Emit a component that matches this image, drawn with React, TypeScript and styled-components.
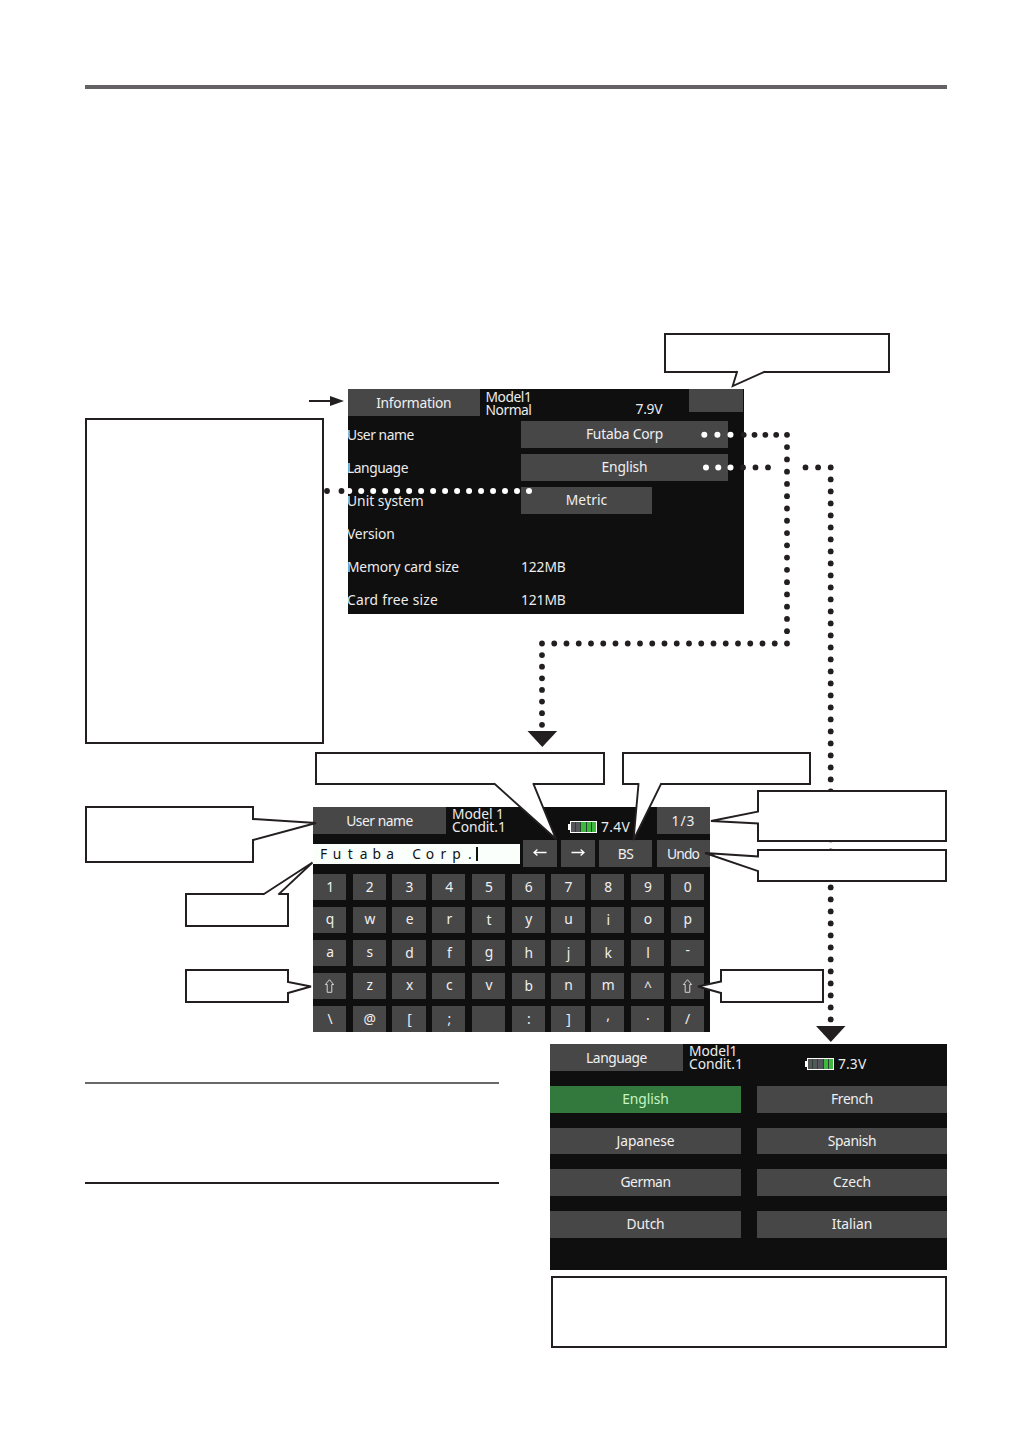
import React from 'react';
import styled, { createGlobalStyle } from 'styled-components';

const INK = '#231f20';

const GlobalStyle = createGlobalStyle`
  *, *::before, *::after { box-sizing: border-box; }
  body { margin: 0; background: #fff; }
`;

const Page = styled.main`
  position: relative;
  display: flex;
  flex-direction: column;
  width: 1032px;
  height: 1434px;
  padding: 85px 85px 0;
  overflow: hidden;
  background: #fff;
  font-family: 'Noto Sans', 'Open Sans', sans-serif;
  font-size: 13.8px;
  line-height: 18px;
  color: #ececec;
`;

const Rule = styled.hr<{ $h: number; $color: string }>`
  width: 100%;
  height: ${(p) => p.$h}px;
  margin: 0;
  border: 0;
  background: ${(p) => p.$color};
`;

const TopHint = styled.div`
  display: flex;
  margin: 244px 0 16px 579px;
`;

const InfoRow = styled.section`
  display: flex;
  align-items: flex-start;
  gap: 24px;
  height: 355px;
`;

const Note = styled.div<{ $w: number; $h: number }>`
  width: ${(p) => p.$w}px;
  height: ${(p) => p.$h}px;
  border: 2px solid ${INK};
`;

const SideNote = styled(Note)`
  margin-top: 29px;
`;

const HintRow = styled.div`
  display: flex;
  gap: 17px;
  margin: 8px 0 0 230px;
`;

const KeyboardRow = styled.section`
  display: flex;
  align-items: flex-start;
  height: 247px;
`;

const LeftHints = styled.div`
  display: flex;
  flex-direction: column;
  align-items: flex-end;
  width: 204px;
  margin: 21px 24px 0 0;
`;

const RightHints = styled.div`
  display: flex;
  flex-direction: column;
  align-items: flex-end;
  width: 237px;
  margin-top: 5px;
`;

const HintSlot = styled.div<{ $top?: number; $side?: 'start' | 'end'; $left?: number }>`
  margin-top: ${(p) => p.$top ?? 0}px;
  margin-left: ${(p) => p.$left ?? 0}px;
  align-self: ${(p) => (p.$side === 'start' ? 'flex-start' : 'flex-end')};
`;

const BottomRow = styled.section`
  display: flex;
  align-items: flex-start;
  justify-content: space-between;
  margin-top: 12px;
`;

const Memo = styled.div`
  display: flex;
  flex-direction: column;
  justify-content: space-between;
  width: 414px;
  height: 102px;
  margin-top: 38px;
`;

const LanguageColumn = styled.div`
  display: flex;
  flex-direction: column;
  align-items: flex-end;
  gap: 6px;
`;

/* ---------- callouts ---------- */

const CalloutBox = styled.div<{ $w: number; $h: number }>`
  position: relative;
  z-index: 3;
  flex: none;
  width: ${(p) => p.$w}px;
  height: ${(p) => p.$h}px;
  border: 2px solid ${INK};
  background: #fff;
`;

const Tail = styled.svg`
  position: absolute;
  left: -2px;
  top: -2px;
  width: 1px;
  height: 1px;
  overflow: visible;
`;

type Pt = [number, number];

function Callout({ w, h, tail }: { w: number; h: number; tail: [Pt, Pt, Pt] }) {
  const [a, tip, b] = tail;
  const horizontalBase = a[1] === b[1];
  return (
    <CalloutBox $w={w} $h={h}>
      <Tail>
        <polygon points={[a, tip, b].join(' ')} fill="#fff" />
        <polygon
          points={
            horizontalBase
              ? `${a[0]},${a[1] - 1.3} ${b[0]},${b[1] - 1.3} ${b[0]},${b[1] + 1.3} ${a[0]},${a[1] + 1.3}`
              : `${a[0] - 1.3},${a[1]} ${b[0] - 1.3},${b[1]} ${b[0] + 1.3},${b[1]} ${a[0] + 1.3},${a[1]}`
          }
          fill="#fff"
        />
        <polyline
          points={[a, tip, b].join(' ')}
          fill="none"
          stroke={INK}
          strokeWidth={1.9}
          strokeLinecap="square"
          strokeMiterlimit={4}
        />
      </Tail>
    </CalloutBox>
  );
}

/* ---------- device screens ---------- */

const Screen = styled.div<{ $w: number; $h: number }>`
  display: flex;
  flex-direction: column;
  flex: none;
  width: ${(p) => p.$w}px;
  height: ${(p) => p.$h}px;
  background: #0f0f0f;
`;

const KeyboardScreen = styled(Screen)`
  margin-top: 22px;
`;

const StatusBar = styled.header`
  display: flex;
  align-items: flex-start;
  height: 27px;
`;

const Cell = styled.div<{ $w?: number; $h?: number; $track?: number; $on?: boolean }>`
  display: flex;
  align-items: center;
  justify-content: center;
  flex: none;
  width: ${(p) => (p.$w ? `${p.$w}px` : 'auto')};
  height: ${(p) => p.$h ?? 27}px;
  padding-bottom: 1px;
  letter-spacing: ${(p) => (p.$track ?? 0) - 0.46}px;
  background: ${(p) => (p.$on ? '#33783d' : '#484748')};
  color: ${(p) => (p.$on ? '#c9f5c4' : '#f0f0f0')};
  white-space: pre;
`;

const BarCell = styled(Cell)`
  padding: 1px 0 0;
`;

const Title = styled.div<{ $w: number; $top?: number; $track?: number; $pitch?: number }>`
  width: ${(p) => p.$w}px;
  padding-left: 6px;
  margin-top: ${(p) => p.$top ?? 0}px;
  line-height: ${(p) => p.$pitch ?? 12.5}px;
  letter-spacing: ${(p) => (p.$track ?? 0) - 0.46}px;
  white-space: pre;
`;

const Voltage = styled.div<{ $w: number; $top: number; $track?: number }>`
  display: flex;
  align-items: center;
  gap: 4px;
  width: ${(p) => p.$w}px;
  height: 16px;
  margin-top: ${(p) => p.$top}px;
  letter-spacing: ${(p) => (p.$track ?? 0) - 0.46}px;
  white-space: nowrap;
`;

const BatteryShell = styled.span`
  display: flex;
  align-items: center;
  flex: none;
`;

const BatteryNub = styled.span`
  width: 2px;
  height: 6px;
  background: #fff;
`;

const BatteryBody = styled.span`
  display: flex;
  gap: 1px;
  width: 27px;
  height: 12px;
  border: 1px solid #fff;
  background: #24452b;
`;

const BatteryCell = styled.span<{ $full: boolean }>`
  flex: 1;
  background: ${(p) => (p.$full ? '#3fb83f' : '#55565c')};
`;

function Battery({ level }: { level: number }) {
  return (
    <BatteryShell>
      <BatteryNub />
      <BatteryBody>
        {[5, 4, 3, 2, 1].map((n) => (
          <BatteryCell key={n} $full={n <= level} />
        ))}
      </BatteryBody>
    </BatteryShell>
  );
}

const Settings = styled.div`
  display: flex;
  flex-direction: column;
  gap: 6px;
  padding-top: 5px;
`;

const SettingRow = styled.div`
  display: flex;
  align-items: center;
  height: 27px;
`;

const SettingLabel = styled.span<{ $track: number }>`
  width: 173px;
  letter-spacing: ${(p) => p.$track - 0.44}px;
  text-indent: -1px;
  white-space: nowrap;
`;

const SettingValue = styled.span`
  letter-spacing: -0.08px;
`;

const InputRow = styled.div`
  display: flex;
  align-items: center;
  gap: 4.5px;
  height: 27px;
  margin-top: 6px;
`;

const NameField = styled.div`
  display: flex;
  align-items: center;
  flex: none;
  width: 206.5px;
  height: 20px;
  margin-right: -1px;
  padding-left: 4px;
  background: #fbfffb;
  color: #111;
`;

const NameChar = styled.span`
  width: 13.3px;
  text-align: center;
`;

const Caret = styled.i`
  width: 2px;
  height: 14px;
  margin-left: -1px;
  background: #111;
`;

const Keys = styled.div`
  display: grid;
  grid-template-columns: repeat(10, 33.2px);
  grid-auto-rows: 26px;
  gap: 7px 6.55px;
  margin-top: 7px;
`;

const Glyph = styled.span<{ $shift: number }>`
  display: block;
  padding-left: 0.5px;
  transform: translateY(${(p) => p.$shift}px);
`;

const LanguageGrid = styled.div`
  display: grid;
  grid-template-columns: 191px 190px;
  column-gap: 16px;
  row-gap: 15px;
  margin-top: 15px;
`;

const ROWS = ['1234567890', 'qwertyuiop', 'asdfghjkl-', '⇧zxcvbnm^⇧', '\\@[; :],./'];
const GLYPH_SHIFT: Record<string, number> = { '-': -3, '^': 1, ',': -4, '.': -4 };
const TALL = 'tidfhjklb';

function glyphShift(c: string) {
  if (c in GLYPH_SHIFT) return GLYPH_SHIFT[c];
  if (TALL.includes(c)) return 0;
  return /[a-z]/.test(c) ? -1 : 0;
}

function ShiftIcon() {
  return (
    <svg width="11" height="15" viewBox="0 0 11 15" fill="none" stroke="#e4e4e4" strokeWidth="0.9">
      <path d="M5.5 1.7 L9.6 6.5 H7.8 V14.3 H3.2 V6.5 H1.4 Z" />
    </svg>
  );
}

function Arrow({ flip = false }: { flip?: boolean }) {
  return (
    <svg width="14" height="10" viewBox="0 0 14 10" fill="none" stroke="#fff" strokeWidth="1.3">
      <path d={flip ? 'M0.5 4.5 H13 M9.6 1.5 L13 4.5 L9.6 7.5' : 'M13.5 4.5 H1 M4.4 1.5 L1 4.5 L4.4 7.5'} />
    </svg>
  );
}

const LANGUAGES: [string, number][] = [
  ['English', 0.4],
  ['French', 0.1],
  ['Japanese', 0.4],
  ['Spanish', 0.1],
  ['German', 0],
  ['Czech', 0.4],
  ['Dutch', 0.3],
  ['Italian', 0.4],
];

/* ---------- dotted connectors ---------- */

const Connectors = styled.svg`
  position: absolute;
  inset: 0;
  z-index: 2;
  pointer-events: none;
`;

function run(from: Pt, to: Pt, steps: number): Pt[] {
  return Array.from({ length: steps + 1 }, (_, i) => [
    from[0] + ((to[0] - from[0]) * i) / steps,
    from[1] + ((to[1] - from[1]) * i) / steps,
  ]);
}

const DARK_DOTS: Pt[] = [
  ...run([743.7, 434.8], [787, 434.8], 4),
  ...run([787, 447.1], [787, 643.5], 16),
  ...run([774.75, 643.5], [542, 643.5], 19),
  ...run([542, 655.1], [542, 724.8], 6),
  ...run([743, 467.4], [768, 467.4], 2),
  ...run([805.5, 467.4], [830.7, 467.4], 2),
  ...run([830.7, 479.4], [830.7, 1019.4], 45),
  [327, 491],
  [341.5, 491],
];

const LIGHT_DOTS: Pt[] = [
  ...run([704.3, 434.8], [730.5, 434.8], 2),
  ...run([706, 467.4], [730.5, 467.4], 2),
  ...run([349.2, 491], [529, 491], 15),
];

function ConnectorLines() {
  return (
    <Connectors width="1032" height="1434" viewBox="0 0 1032 1434">
      {DARK_DOTS.map(([x, y]) => (
        <circle key={`d${x}-${y}`} cx={x} cy={y} r="2.9" fill={INK} />
      ))}
      {LIGHT_DOTS.map(([x, y]) => (
        <circle key={`l${x}-${y}`} cx={x} cy={y} r="3" fill="#fff" />
      ))}
      <g fill={INK}>
        <polygon points="527.5,731 557.2,731 542.3,747" />
        <polygon points="816,1026 845.5,1026 830.8,1042" />
        <rect x="309" y="400" width="23" height="2" />
        <polygon points="330,396 344,401 330,406" />
      </g>
    </Connectors>
  );
}

export default function App() {
  return (
    <>
      <GlobalStyle />
      <Page>
        <Rule $h={4} $color="#636163" />
        <TopHint>
          <Callout w={226} h={40} tail={[[73, 39], [68.7, 53], [100, 39]]} />
        </TopHint>

        <InfoRow>
          <SideNote $w={239} $h={326} />
          <Screen $w={396} $h={225}>
            <StatusBar>
              <BarCell $w={131.5} $track={0.2}>Information</BarCell>
              <Title $w={156} $top={2}>{'Model1\nNormal'}</Title>
              <Voltage $w={53.5} $top={12} $track={0.2}>7.9V</Voltage>
              <Cell $w={54} $h={23} />
            </StatusBar>
            <Settings>
              <SettingRow>
                <SettingLabel $track={0}>User name</SettingLabel>
                <Cell $w={207} $track={0.25}>Futaba Corp</Cell>
              </SettingRow>
              <SettingRow>
                <SettingLabel $track={0}>Language</SettingLabel>
                <Cell $w={207} $track={0.3}>English</Cell>
              </SettingRow>
              <SettingRow>
                <SettingLabel $track={0.45}>Unit system</SettingLabel>
                <Cell $w={131} $track={0.5}>Metric</Cell>
              </SettingRow>
              <SettingRow>
                <SettingLabel $track={0.3}>Version</SettingLabel>
              </SettingRow>
              <SettingRow>
                <SettingLabel $track={0.3}>Memory card size</SettingLabel>
                <SettingValue>122MB</SettingValue>
              </SettingRow>
              <SettingRow>
                <SettingLabel $track={0.68}>Card free size</SettingLabel>
                <SettingValue>121MB</SettingValue>
              </SettingRow>
            </Settings>
          </Screen>
        </InfoRow>

        <HintRow>
          <Callout w={290} h={33} tail={[[179.7, 32], [241, 87], [218.5, 32]]} />
          <Callout w={189} h={33} tail={[[16.5, 32], [11.5, 88], [39, 32]]} />
        </HintRow>

        <KeyboardRow>
          <LeftHints>
            <HintSlot $side="start">
              <Callout w={169} h={57} tail={[[168, 13], [231, 17], [168, 34]]} />
            </HintSlot>
            <HintSlot $top={30}>
              <Callout w={104} h={34} tail={[[79, 1], [127.5, -30.5], [94, 1]]} />
            </HintSlot>
            <HintSlot $top={42}>
              <Callout w={104} h={34} tail={[[103, 13], [126, 17.5], [103, 24]]} />
            </HintSlot>
          </LeftHints>

          <KeyboardScreen $w={397} $h={225}>
            <StatusBar>
              <BarCell $w={133}>User name</BarCell>
              <Title $w={122} $track={0.4} $pitch={13}>{'Model 1\nCondit.1'}</Title>
              <Voltage $w={89} $top={12} $track={0.8}>
                <Battery level={3} />
                7.4V
              </Voltage>
              <BarCell $w={53} $track={1.5}>1/3</BarCell>
            </StatusBar>
            <InputRow>
              <NameField>
                {[...'Futaba Corp.'].map((c, i) => (
                  <NameChar key={i}>{c}</NameChar>
                ))}
                <Caret />
              </NameField>
              <Cell $w={33.5}><Arrow /></Cell>
              <Cell $w={33.5}><Arrow flip /></Cell>
              <BarCell $w={53}>BS</BarCell>
              <BarCell $w={53} $track={-0.4}>Undo</BarCell>
            </InputRow>
            <Keys>
              {ROWS.flatMap((row, r) =>
                [...row].map((c, i) => (
                  <Cell key={`${r}-${i}`} $h={26}>
                    {c === '⇧' ? <ShiftIcon /> : <Glyph $shift={glyphShift(c)}>{c}</Glyph>}
                  </Cell>
                )),
              )}
            </Keys>
          </KeyboardScreen>

          <RightHints>
            <Callout w={190} h={52} tail={[[1, 21.5], [-46, 31], [1, 33.5]]} />
            <HintSlot $top={7}>
              <Callout w={190} h={33} tail={[[1, 7.5], [-52, 4], [1, 22]]} />
            </HintSlot>
            <HintSlot $top={87} $side="start" $left={10}>
              <Callout w={104} h={34} tail={[[1, 12.5], [-22, 17.5], [1, 24]]} />
            </HintSlot>
          </RightHints>
        </KeyboardRow>

        <BottomRow>
          <Memo>
            <Rule $h={2} $color="#69676a" />
            <Rule $h={2} $color={INK} />
          </Memo>
          <LanguageColumn>
            <Screen $w={397} $h={226}>
              <StatusBar>
                <BarCell $w={133}>Language</BarCell>
                <Title $w={122} $track={0.4} $pitch={13}>{'Model1\nCondit.1'}</Title>
                <Voltage $w={89} $top={12} $track={0.6}>
                  <Battery level={2} />
                  7.3V
                </Voltage>
              </StatusBar>
              <LanguageGrid>
                {LANGUAGES.map(([name, track], i) => (
                  <Cell key={name} $on={i === 0} $track={track} $h={26.7}>{name}</Cell>
                ))}
              </LanguageGrid>
            </Screen>
            <Note $w={396} $h={72} />
          </LanguageColumn>
        </BottomRow>
        <ConnectorLines />
      </Page>
    </>
  );
}
